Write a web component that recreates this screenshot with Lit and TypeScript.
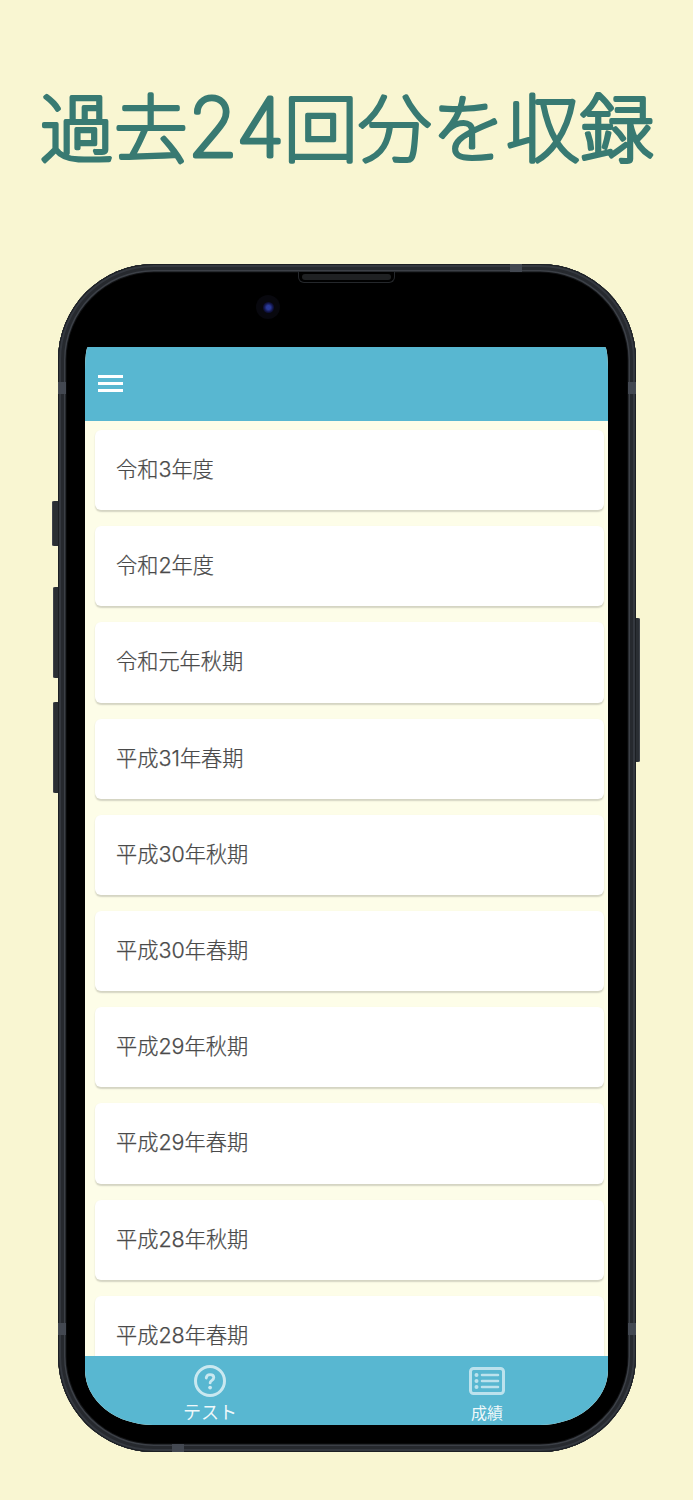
import { LitElement, html, css } from "lit";
import { customElement } from "lit/decorators.js";

const ITEMS = ["令和3年度","令和2年度","令和元年秋期","平成31年春期","平成30年秋期","平成30年春期","平成29年秋期","平成29年春期","平成28年秋期","平成28年春期"];

@customElement("app-root")
export class AppRoot extends LitElement {
  static styles = css`
    :host { display: block; width: 693px; height: 1500px; overflow: hidden; background: #f9f6d2;
      font-family: "Noto Sans CJK JP", "Noto Sans", sans-serif; }
    .title { height: 264px; display: block; }
    .title svg { display: block; }
    .title text { font-family: "Noto Sans CJK JP", sans-serif; font-size: 73.5px; font-weight: 100; letter-spacing: .5px; fill: #387a72; stroke: #387a72;
      stroke-width: 4px; stroke-linejoin: round; stroke-linecap: round; }
    .title .digits { font-family: Inter, sans-serif; font-size: 80px; font-weight: 100; letter-spacing: 0; stroke-width: 5px; }
    .stage { padding-left: 58px; }
    .phone { position: relative; width: 578px; height: 1188px; box-sizing: border-box; border-radius: 96px; background: #000;
      padding: 83px 28px 27px 27px;
      box-shadow: inset 0 0 0 1px #1c1f23, inset 0 0 0 3px #34383f, inset 0 0 0 6px #26292e, inset 0 0 0 7.5px #3c4047, inset 0 0 0 8.5px #111214; }
    .btn { position: absolute; background: #2a2e33; border-radius: 2px 0 0 2px; left: -5px; width: 5px; box-shadow: inset 1px 0 0 #3f434a; }
    .b1 { top: 237px; height: 45px; left: -6px; width: 6px; }
    .b2 { top: 323px; height: 91px; }
    .b3 { top: 438px; height: 91px; }
    .b4 { left: auto; right: -4px; width: 4px; top: 354px; height: 144px; border-radius: 0 2px 2px 0; box-shadow: inset -1px 0 0 #3f434a; }
    .band { position: absolute; background: #434851; }
    .t1 { left: 452px; top: 0; width: 12px; height: 8px; }
    .l1 { left: 0; top: 118px; width: 8px; height: 12px; }
    .l2 { left: 0; top: 1059px; width: 8px; height: 12px; }
    .r1 { right: 0; top: 118px; width: 8px; height: 12px; }
    .r2 { right: 0; top: 1059px; width: 8px; height: 12px; }
    .b5 { left: 114px; bottom: 0; width: 12px; height: 8px; }
    .speaker { position: absolute; left: 240px; top: 8px; width: 97px; height: 11px; box-sizing: border-box; background: #000;
      border: 1px solid #24272b; border-top: 0; border-radius: 0 0 6px 6px; display: flex; align-items: center; justify-content: center; }
    .speaker span { display: block; width: 89px; height: 6px; border-radius: 3px; background: #1f2123; }
    .cam { position: absolute; left: 198px; top: 31px; width: 24px; height: 24px; border-radius: 50%; background: #08080e;
      display: flex; align-items: center; justify-content: center; }
    .cam span { display: block; width: 11px; height: 11px; border-radius: 50%; background: radial-gradient(circle, #2a3a9a 0 25%, #10123f 60%, #07071c 100%); }
    .screen { width: 523px; height: 1078px; display: flex; flex-direction: column; overflow: hidden; background: #fdfde8;
      border-radius: 3px 3px 68px 68px / 24px 24px 55px 55px; }
    .bar { flex: none; height: 74px; background: #58b7d1; display: flex; align-items: center; padding-left: 13px; padding-bottom: 2px; box-sizing: border-box; }
    .burger { display: flex; flex-direction: column; gap: 4px; width: 25px; }
    .burger i { display: block; height: 3px; background: #fff; }
    .list { flex: 1; min-height: 0; overflow: hidden; display: flex; flex-direction: column; gap: 16px; padding: 9px 4px 0 10px; }
    .card { flex: none; height: 80.2px; box-sizing: border-box; background: #fff; border-radius: 6px; padding: 0 0 5px 21px;
      display: flex; align-items: center; white-space: pre; font-size: 21.2px; font-weight: 300; color: #4a4a4a; -webkit-text-stroke: .25px #4a4a4a;
      box-shadow: 0 1.5px 1.5px rgba(0,0,0,.16); }
    .num { font-family: Inter, sans-serif; font-size: 21.5px; }
    .tabs { flex: none; height: 69px; background: #58b7d1; display: flex; justify-content: space-between; padding: 0 103px 0 98px; color: #fff; }
    .tab { display: flex; flex-direction: column; align-items: center; }
    .tab svg { display: block; }
    .t-a svg { margin-top: 9px; }
    .t-a span { font-size: 18px; line-height: 22px; margin-top: 3px; color: rgba(255,255,255,.92); }
    .t-b svg { margin-top: 11px; }
    .t-b span { font-size: 16px; line-height: 20px; margin-top: 7px; color: rgba(255,255,255,.92); }
  `;
  label(t: string) {
    return t.split(/(\d+)/).map((p, i) => (i % 2 ? html`<span class="num">${p}</span>` : p));
  }
  render() {
    return html`
      <div class="title"><svg width="693" height="264" viewBox="0 0 693 264"><text x="347" y="156" text-anchor="middle">過去<tspan class="digits">24</tspan>回分を収録</text></svg></div>
      <div class="stage">
        <div class="phone">
          <div class="btn b1"></div><div class="btn b2"></div><div class="btn b3"></div><div class="btn b4"></div>
          <div class="band t1"></div><div class="band l1"></div><div class="band l2"></div>
          <div class="band r1"></div><div class="band r2"></div><div class="band b5"></div>
          <div class="speaker"><span></span></div>
          <div class="cam"><span></span></div>
          <div class="screen">
            <div class="bar"><div class="burger"><i></i><i></i><i></i></div></div>
            <div class="list">${ITEMS.map((t) => html`<div class="card"><div>${this.label(t)}</div></div>`)}</div>
            <div class="tabs">
              <div class="tab t-a">
                <svg width="32" height="32" viewBox="0 0 32 32" fill="none" stroke="#fff" stroke-opacity=".68">
                  <circle cx="16" cy="16" r="14.5" stroke-width="3"/>
                  <path d="M12.2 13c.2-2.2 1.7-3.4 3.9-3.4 2.2 0 3.7 1.2 3.7 3 0 2.7-3.7 2.7-3.7 5.3" stroke-width="2.8" stroke-linecap="round"/>
                  <circle cx="16.1" cy="22.6" r="1.9" fill="#fff" fill-opacity=".68" stroke="none"/>
                </svg>
                <span>テスト</span>
              </div>
              <div class="tab t-b">
                <svg width="36" height="28" viewBox="0 0 36 28" fill="none" stroke="#fff" stroke-opacity=".6">
                  <rect x="1.5" y="1.5" width="33" height="25" rx="3" stroke-width="3"/>
                  <path d="M13 8h16M13 14h16M13 20h16" stroke-width="2.6" stroke-linecap="round"/>
                  <g fill="#fff" fill-opacity=".6" stroke="none"><circle cx="7.5" cy="8" r="2"/><circle cx="7.5" cy="14" r="2"/><circle cx="7.5" cy="20" r="2"/></g>
                </svg>
                <span>成績</span>
              </div>
            </div>
          </div>
        </div>
      </div>`;
  }
}
